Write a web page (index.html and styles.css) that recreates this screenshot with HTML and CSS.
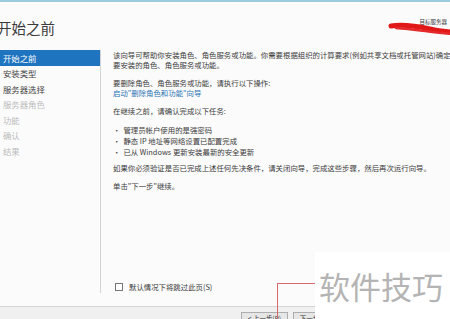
FILE: index.html
```html
<!DOCTYPE html>
<html lang="zh-CN">
<head>
  <meta charset="UTF-8">
  <title>添加角色和功能向导</title>
  <link rel="stylesheet" href="styles.css">
</head>
<body>
  <div class="window">
    <div class="topline"></div>

    <header class="header">
      <h1>开始之前</h1>
      <div class="target">目标服务器</div>
    </header>

    <div class="main">
      <!-- 左侧步骤 -->
      <ul class="steps">
        <li class="active">开始之前</li>
        <li>安装类型</li>
        <li>服务器选择</li>
        <li class="disabled">服务器角色</li>
        <li class="disabled">功能</li>
        <li class="disabled">确认</li>
        <li class="disabled">结果</li>
      </ul>

      <!-- 内容 -->
      <div class="content">
        <p>该向导可帮助你安装角色、角色服务或功能。你需要根据组织的计算要求(例如共享文档或托管网站)确定<br>要安装的角色、角色服务或功能。</p>
        <p>要删除角色、角色服务或功能，请执行以下操作:<br><a href="#">启动"删除角色和功能"向导</a></p>
        <p>在继续之前，请确认完成以下任务:</p>
        <ul class="tasks">
          <li>管理员帐户使用的是强密码</li>
          <li>静态 IP 地址等网络设置已配置完成</li>
          <li>已从 Windows 更新安装最新的安全更新</li>
        </ul>
        <p>如果你必须验证是否已完成上述任何先决条件，请关闭向导，完成这些步骤，然后再次运行向导。</p>
        <p>单击"下一步"继续。</p>

        <label class="skip"><span class="box"></span>默认情况下将跳过此页(S)</label>
      </div>
    </div>

    <footer class="footer">
      <button>&lt; 上一步(P)</button>
      <button>下一步(N) &gt;</button>
      <button>安装(I)</button>
      <button>取消</button>
    </footer>

    <!-- 涂抹 -->
    <svg class="scribble" width="64" height="14" viewBox="0 0 64 14">
      <path d="M3 4 C 15 2, 28 4, 42 7 S 58 10, 64 10" stroke="#e01818" stroke-width="5" fill="none" stroke-linecap="round"/>
      <path d="M8 6 C 25 7, 42 10, 64 12" stroke="#e42a2a" stroke-width="2.5" fill="none" stroke-linecap="round"/>
    </svg>

    <!-- 标注线 -->
    <div class="marker"></div>

    <!-- 水印 -->
    <div class="watermark">软件技巧</div>
  </div>
</body>
</html>
```

FILE: styles.css
```css
* {
  margin: 0;
  padding: 0;
  box-sizing: border-box;
}
body {
  font-family: "Noto Sans CJK SC", "Liberation Sans", sans-serif;
  background: #fbfbfb;
  color: #3a3a3a;
}
.window {
  position: relative;
  width: 450px;
  height: 319px;
  overflow: hidden;
  display: flex;
  flex-direction: column;
}
.topline {
  flex-shrink: 0;
  height: 2px;
  background: #9ccbe0;
}
.header {
  flex-shrink: 0;
  height: 48px;
  display: flex;
  justify-content: space-between;
  align-items: flex-start;
}
.header h1 {
  font-size: 14.5px;
  font-weight: normal;
  color: #3c3c3c;
  margin: 17px 0 0 -3px;
  line-height: 18px;
}
.target {
  font-size: 5.5px;
  color: #333;
  margin: 16px 3px 0 0;
}
.main {
  flex-shrink: 0;
  display: flex;
  height: 243px;
}
.steps {
  list-style: none;
  width: 101px;
  border-right: 1px solid #d4d4d4;
  font-size: 8.4px;
  color: #444;
}
.steps li {
  height: 15.6px;
  line-height: 15.6px;
  padding-left: 3px;
}
.steps li.active {
  height: 16px;
  line-height: 16px;
  background: #1f74bf;
  color: #fff;
}
.steps li.disabled {
  color: #bcbcbc;
}
.content {
  flex: 1;
  display: flex;
  flex-direction: column;
  padding: 0 0 0 12px;
  font-size: 7.4px;
  line-height: 10px;
  white-space: nowrap;
  overflow: hidden;
}
.content p {
  margin-bottom: 8px;
}
.content a {
  color: #2a74b4;
  text-decoration: none;
}
.tasks {
  list-style: none;
  margin-bottom: 6px;
}
.tasks li {
  line-height: 11px;
}
.tasks li::before {
  content: "•";
  margin-right: 3px;
}
.skip {
  margin-top: auto;
  margin-bottom: 1px;
  margin-left: 2px;
  display: flex;
  align-items: center;
  gap: 6px;
  font-size: 7.4px;
}
.skip .box {
  width: 8px;
  height: 8px;
  border: 1px solid #777;
  background: #fff;
}
.footer {
  margin-top: 13px;
  flex: 1;
  min-height: 0;
  overflow: hidden;
  background: #f0f0f0;
  border-top: 1px solid #d6d6d6;
  display: flex;
  justify-content: flex-end;
  align-items: flex-start;
  gap: 5px;
  padding: 5px 6px 0 0;
}
.footer button {
  flex-shrink: 0;
  width: 47px;
  height: 10px;
  font-family: inherit;
  font-size: 6.5px;
  line-height: 8px;
  color: #333;
  background: #e6e6e6;
  border: 1px solid #adadad;
  border-bottom: none;
  white-space: nowrap;
}
.scribble {
  position: absolute;
  left: 388px;
  top: 22px;
}
.marker {
  position: absolute;
  left: 277px;
  top: 283px;
  width: 39px;
  height: 40px;
  border-top: 1px solid #d46a6a;
  border-left: 1px solid #d46a6a;
}
.watermark {
  position: absolute;
  left: 315px;
  top: 252px;
  width: 135px;
  height: 67px;
  background: #fff;
  color: #b4b4b4;
  font-size: 31px;
  line-height: 67px;
  padding-left: 4px;
  white-space: nowrap;
}
```
